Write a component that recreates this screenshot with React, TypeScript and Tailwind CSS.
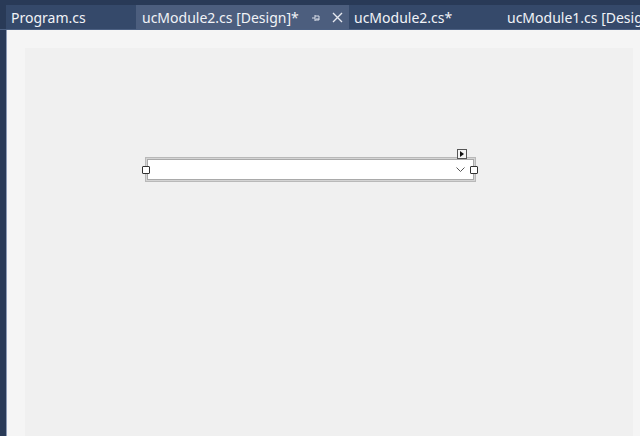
import React from "react";

const tabFont = { fontFamily: '"Segoe UI", "Noto Sans", "Open Sans", sans-serif' };

function PinIcon() {
  return (
    <svg width="10" height="10" viewBox="0 0 10 10" className="text-[#d6dbe6]">
      <path d="M1 5h3M4 2v6M4 3h4v4H4M5 6h3" stroke="currentColor" strokeWidth="1" fill="none" />
    </svg>
  );
}

function CloseIcon() {
  return (
    <svg width="11" height="11" viewBox="0 0 11 11">
      <path d="M1 1l9 9M10 1l-9 9" stroke="#e6e9f0" strokeWidth="1.4" />
    </svg>
  );
}

export default function App() {
  return (
    <div className="w-[640px] h-[436px] overflow-hidden bg-[#293a57] flex flex-col" style={tabFont}>
      {/* tab strip */}
      <div className="h-[30px] pt-[5px] pl-[6px] flex items-stretch text-[14px] text-[#f1f3f7] border-b border-[#4d6183] shrink-0">
        <div className="w-[130px] bg-[#35496a] pl-[5px] flex items-center">Program.cs</div>
        <div className="w-[213px] bg-[#4c5e7e] pl-[6px] flex items-center">
          <span>ucModule2.cs [Design]*</span>
          <span className="ml-[12px] mt-[2px]"><PinIcon /></span>
          <span className="ml-[11px] mt-[1px]"><CloseIcon /></span>
        </div>
        <div className="w-[152px] bg-[#35496a] pl-[5px] flex items-center">ucModule2.cs*</div>
        <div className="flex-1 bg-[#35496a] pl-[6px] flex items-center whitespace-nowrap overflow-hidden">ucModule1.cs [Design]</div>
      </div>

      {/* designer surface */}
      <div className="flex-1 flex pl-[6px]">
        <div className="flex-1 bg-[#f5f5f5] border-l border-[#8d9bb5] pl-[18px] pt-[18px] pr-[7px]">
          <div className="h-full bg-[#f0f0f0] pt-[109px] pl-[120px]">
            <div className="relative w-[331px]">
              {/* selection frame */}
              <div className="border border-[#b9b9b9] bg-[#d4d4d4] p-[1px]">
                <div className="h-[21px] bg-white border border-[#a9a9a9] flex items-center justify-end pr-[8px]">
                  <svg width="9" height="6" viewBox="0 0 9 6">
                    <path d="M0.5 0.5l4 4 4-4" stroke="#555" strokeWidth="1" fill="none" />
                  </svg>
                </div>
              </div>
              {/* grab handles */}
              <div className="absolute left-[-3px] top-[9px] w-[8px] h-[8px] bg-white border border-[#333] rounded-[1px]" />
              <div className="absolute right-[-2px] top-[9px] w-[8px] h-[8px] bg-white border border-[#333] rounded-[1px]" />
              {/* smart tag */}
              <div className="absolute right-[9px] top-[-8px] w-[10px] h-[10px] bg-[#f4f4f4] border border-[#555] flex items-center justify-center">
                <svg width="4" height="6" viewBox="0 0 4 6">
                  <path d="M0 0l4 3-4 3z" fill="#111" />
                </svg>
              </div>
            </div>
          </div>
        </div>
      </div>
    </div>
  );
}
